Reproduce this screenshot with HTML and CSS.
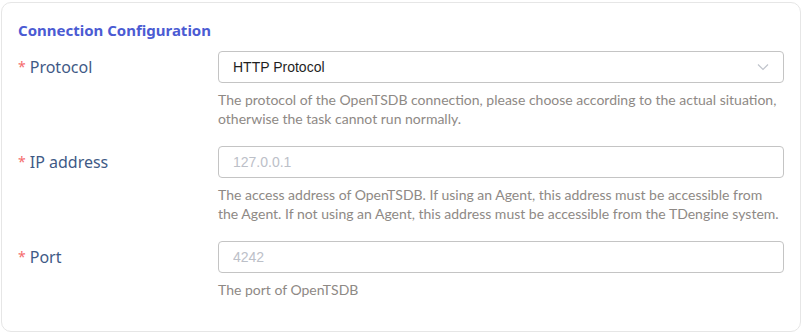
FILE: index.html
```html
<!DOCTYPE html>
<html lang="en">
    <head>
        <meta charset="UTF-8" />
        <meta name="viewport" content="width=device-width, initial-scale=1.0" />
        <title>Connection Configuration</title>
        <link rel="stylesheet" href="styles.css">
    </head>
    <body>
        <div class="card">
            <h2 class="card-title">Connection Configuration</h2>

            <!-- Protocol -->
            <div class="form-row">
                <label class="form-label"><span class="req">*</span>Protocol</label>
                <div class="form-field">
                    <div class="select-box">
                        <span class="select-value">HTTP Protocol</span>
                        <svg class="chevron" width="12" height="8" viewBox="0 0 12 8">
                            <path d="M1 1.5 L6 6.5 L11 1.5" fill="none" stroke="#c0c4cc" stroke-width="1.2" />
                        </svg>
                    </div>
                    <p class="help">The protocol of the OpenTSDB connection, please choose according to the actual situation, otherwise the task cannot run normally.</p>
                </div>
            </div>

            <!-- IP address -->
            <div class="form-row">
                <label class="form-label" for="ip"><span class="req">*</span>IP address</label>
                <div class="form-field">
                    <input type="text" id="ip" class="text-input" placeholder="127.0.0.1" />
                    <p class="help">The access address of OpenTSDB. If using an Agent, this address must be accessible from the Agent. If not using an Agent, this address must be accessible from the TDengine system.</p>
                </div>
            </div>

            <!-- Port -->
            <div class="form-row">
                <label class="form-label" for="port"><span class="req">*</span>Port</label>
                <div class="form-field">
                    <input type="text" id="port" class="text-input" placeholder="4242" />
                    <p class="help">The port of OpenTSDB</p>
                </div>
            </div>
        </div>
    </body>
</html>
```

FILE: styles.css
```css
body {
    margin: 0;
    padding: 2px 4px 2px 1px;
    background: #ffffff;
    font-family: "Open Sans", Arial, sans-serif;
}
.card {
    border: 1px solid #e6e6e6;
    border-radius: 10px;
    padding: 17px 16px 16px 16px;
    height: 295px;
    box-sizing: content-box;
}
.card-title {
    margin: 0 0 11px 0;
    font-family: "Noto Sans", sans-serif;
    font-size: 15px;
    font-weight: bold;
    color: #4b5bd3;
    line-height: 20px;
}
.form-row {
    display: flex;
    margin-bottom: 18px;
}
.form-label {
    width: 200px;
    flex-shrink: 0;
    font-family: "Noto Sans", sans-serif;
    font-size: 16px;
    color: #3f5a86;
    line-height: 31px;
}
.req {
    color: #f56c6c;
    font-size: 14px;
    margin-right: 4px;
    vertical-align: 1px;
}
.form-field {
    flex: 1;
}
.select-box,
.text-input {
    display: flex;
    align-items: center;
    justify-content: space-between;
    box-sizing: border-box;
    width: 100%;
    height: 32px;
    border: 1px solid #c4c4c4;
    border-radius: 4px;
    padding: 0 14px;
    background: #ffffff;
}
.select-value {
    font-family: "Liberation Sans", Arial, sans-serif;
    font-size: 14px;
    color: #1f1f1f;
}
.text-input {
    font-family: "Liberation Sans", Arial, sans-serif;
    font-size: 14px;
    outline: none;
}
.text-input::placeholder {
    color: #bcc0c8;
}
.help {
    margin: 7px 0 0 0;
    font-family: Lato, "Open Sans", sans-serif;
    font-size: 14px;
    line-height: 19px;
    color: #8e8985;
}
```
